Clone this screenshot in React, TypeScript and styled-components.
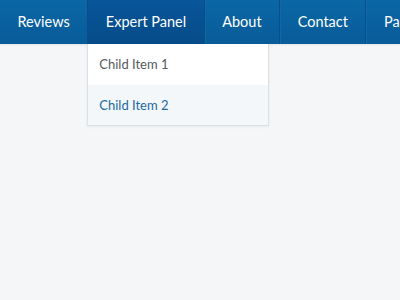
import React from "react";
import styled, { createGlobalStyle } from "styled-components";

const GlobalStyle = createGlobalStyle`
  html, body {
    margin: 0;
    padding: 0;
    background: #f4f6f8;
    font-family: Lato, "Open Sans", "Liberation Sans", sans-serif;
  }
`;

const menu = [
  { label: "Reviews" },
  { label: "Expert Panel", active: true, children: ["Child Item 1", "Child Item 2"] },
  { label: "About" },
  { label: "Contact" },
  { label: "Partners" },
];

function App() {
  return (
    <Page>
      <GlobalStyle />
      <NavBar>
        {menu.map((item) => (
          <NavItem key={item.label} active={!!item.active}>
            <NavLink>{item.label}</NavLink>
            {item.children && (
              <Dropdown>
                {item.children.map((child, i) => (
                  <DropItem key={child} hover={i === 1}>
                    {child}
                  </DropItem>
                ))}
              </Dropdown>
            )}
          </NavItem>
        ))}
      </NavBar>
    </Page>
  );
}

const Page = styled.div`
  width: 400px;
  height: 300px;
  overflow: hidden;
  background: #f4f6f8;
`;
const NavBar = styled.ul`
  display: flex;
  margin: 0;
  padding: 0;
  list-style: none;
  height: 44px;
  background: linear-gradient(#0b66a6, #085c98);
  box-shadow: 0 1px 2px rgba(0, 0, 0, 0.08);
`;
const NavItem = styled.li<{ active: boolean }>`
  position: relative;
  flex-shrink: 0;
  border-right: 1px solid #074f85;
  box-shadow: 1px 0 0 #0c6aab;
  background: ${({ active }) =>
    active ? "linear-gradient(#08559a, #064c88)" : "transparent"};
`;
const NavLink = styled.a`
  display: block;
  line-height: 44px;
  padding: 0 17.5px;
  color: #ffffff;
  font-size: 14.5px;
  cursor: pointer;
`;
const Dropdown = styled.ul`
  position: absolute;
  top: 44px;
  left: -1px;
  width: 180px;
  margin: 0;
  padding: 0;
  list-style: none;
  background: #ffffff;
  border: 1px solid #dde1e5;
  border-top: none;
  box-shadow: 0 1px 3px rgba(0, 0, 0, 0.06);
  z-index: 2;
`;
const DropItem = styled.li<{ hover: boolean }>`
  height: 40.5px;
  line-height: 40.5px;
  padding: 0 11px;
  font-size: 13px;
  color: ${({ hover }) => (hover ? "#1b6aa3" : "#555a60")};
  background: ${({ hover }) => (hover ? "#f4f7f9" : "#ffffff")};
`;

export default App;
